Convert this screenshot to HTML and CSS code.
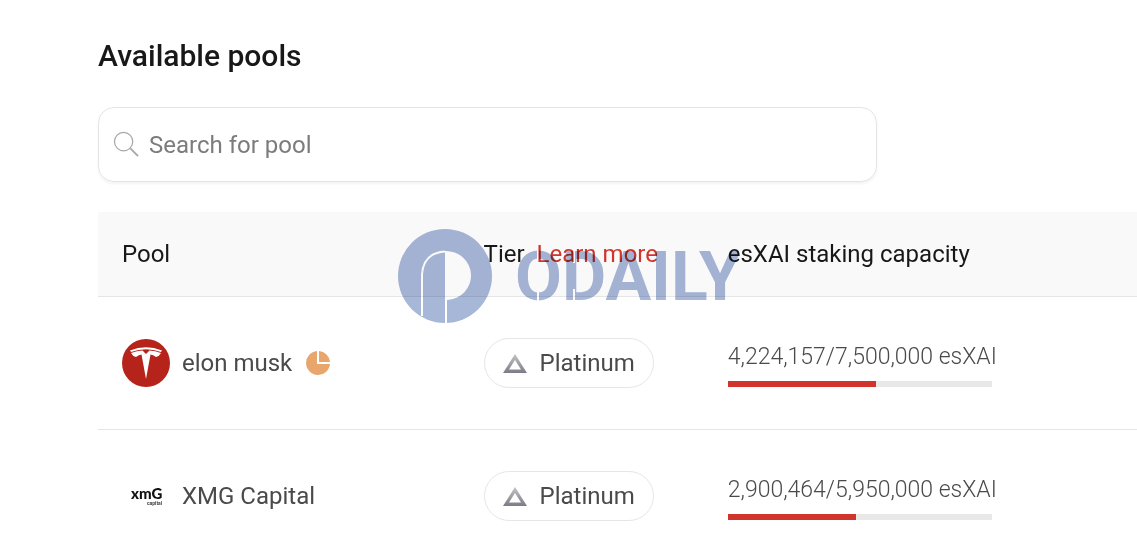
FILE: index.html
```html
<!DOCTYPE html>
<html lang="en">
<head>
  <meta charset="UTF-8">
  <meta name="viewport" content="width=device-width, initial-scale=1.0">
  <title>Available pools</title>
  <link rel="stylesheet" href="styles.css">
</head>
<body>

  <main class="pools">
    <h1>Available pools</h1>

    <!-- Search -->
    <label class="search" for="pool-search">
      <svg class="search-icon" viewBox="0 0 28 28" aria-hidden="true">
        <circle cx="11" cy="11" r="9.5" />
        <path class="handle" d="M18 18l8 8" />
      </svg>
      <input type="search" id="pool-search" placeholder="Search for pool" aria-label="Search for pool">
    </label>

    <!-- Pool list -->
    <div class="table-wrap">
      <table>
        <thead>
          <tr>
            <th class="col-pool">Pool</th>
            <th class="col-tier">Tier <a href="#">Learn more</a></th>
            <th>esXAI staking capacity</th>
          </tr>
        </thead>
        <tbody>
          <tr>
            <td>
              <div class="pool">
                <svg class="avatar" viewBox="0 0 48 48" aria-hidden="true">
                  <circle cx="24" cy="24" r="24" fill="#b5231b" />
                  <path d="M8 11.500Q24 5 40 11.500L39 13Q24 7.500 9 13Z" fill="#fff" />
                  <path d="M9 14Q15 11.500 20.500 11.500L24 15L27.500 11.500Q33 11.500 39 14Q37.500 17 34 18Q31 15.500 28.500 15.500L24 40L19.500 15.500Q17 15.500 14 18Q10.500 17 9 14Z" fill="#fff" />
                </svg>
                <span class="pool-name">elon musk</span>
                <svg class="pie" viewBox="0 0 24 24" aria-hidden="true">
                  <path d="M11 0A12 12 0 1 0 24 13H11Z" />
                  <path d="M13 0A12 12 0 0 1 24 11H13Z" />
                </svg>
              </div>
            </td>
            <td>
              <span class="tier">
                <svg class="tier-icon" viewBox="0 0 24 20" aria-hidden="true">
                  <defs>
                    <linearGradient id="platinum" x1="0" y1="0" x2="0" y2="1">
                      <stop offset="0" stop-color="#c4c4c6" />
                      <stop offset="1" stop-color="#7c7c88" />
                    </linearGradient>
                  </defs>
                  <path fill="url(#platinum)" fill-rule="evenodd" d="M12 1L24 20H0ZM12 7L6 16.500H18Z" />
                </svg>
                Platinum
              </span>
            </td>
            <td>
              <div class="capacity">4,224,157/7,500,000 esXAI</div>
              <div class="bar"><div class="bar-fill" style="width: 56.3%"></div></div>
            </td>
          </tr>
          <tr>
            <td>
              <div class="pool">
                <svg class="avatar" viewBox="0 0 48 48" aria-hidden="true">
                  <text class="xmg" x="9" y="27">xmG</text>
                  <text class="xmg-sub" x="25" y="33">capital</text>
                </svg>
                <span class="pool-name">XMG Capital</span>
              </div>
            </td>
            <td>
              <span class="tier">
                <svg class="tier-icon" viewBox="0 0 24 20" aria-hidden="true">
                  <path fill="url(#platinum)" fill-rule="evenodd" d="M12 1L24 20H0ZM12 7L6 16.500H18Z" />
                </svg>
                Platinum
              </span>
            </td>
            <td>
              <div class="capacity">2,900,464/5,950,000 esXAI</div>
              <div class="bar"><div class="bar-fill" style="width: 48.7%"></div></div>
            </td>
          </tr>
        </tbody>
      </table>

      <!-- Watermark -->
      <div class="watermark">
        <svg class="watermark-mark" viewBox="0 0 94 94" aria-hidden="true">
          <circle cx="47" cy="47" r="47" />
          <path class="bowl" d="M47 22A25 24.500 0 0 1 49 71H47Z" />
          <path class="slit" d="M24 87V46Q25 24 47 22.500M48 70V94" />
        </svg>
        <svg class="watermark-name" viewBox="0 0 224 94" aria-label="ODAILY">
          <text x="0" y="71">ODAILY</text>
          <path class="slit" d="M23 20V36M23 58V76M59 20V34M59 60V76" />
        </svg>
      </div>
    </div>
  </main>

</body>
</html>
```
FILE: styles.css
```css
/* Base styling */
* {
  box-sizing: border-box;
}

body {
  margin: 0;
  background: #fff;
  color: #181818;
  font-family: Roboto, "Liberation Sans", sans-serif;
  font-size: 24px;
  line-height: 32px;
  overflow: hidden;
}

.pools {
  padding: 36px 0 0 98px;
}

h1 {
  margin: 0 0 31px;
  font-size: 30px;
  font-weight: 500;
  line-height: 40px;
}

/* Search */
.search {
  display: flex;
  align-items: center;
  gap: 9px;
  width: 75%;
  height: 75px;
  margin-bottom: 30px;
  padding: 0 14px;
  border: 1px solid #e4e4e4;
  border-radius: 16px;
  box-shadow: 0 2px 3px rgba(0, 0, 0, 0.05);
}

.search-icon {
  width: 27px;
  height: 27px;
  flex: none;
  fill: none;
  stroke: #a9a9a9;
  stroke-width: 1.3;
}

.search-icon .handle {
  stroke-width: 2;
}

.search input {
  flex: 1;
  min-width: 0;
  padding: 0;
  border: none;
  outline: none;
  background: none;
  font: inherit;
}

.search input::placeholder {
  color: #7c7c7c;
}

/* Table */
.table-wrap {
  position: relative;
}

table {
  width: 100%;
  table-layout: fixed;
  border-collapse: separate;
  border-spacing: 0;
}

th,
td {
  padding: 0 0 0 24px;
  border-bottom: 1px solid #e6e6e6;
  text-align: left;
  white-space: nowrap;
}

th {
  height: 85px;
  background: #f9f9f9;
  font-weight: 400;
}

td {
  height: 133px;
  color: #4a4a4a;
}

.col-pool {
  width: 34.8%;
}

.col-tier {
  width: 23.5%;
}

th a {
  margin-left: 6px;
  color: #d0342c;
  text-decoration: none;
}

.pool {
  display: flex;
  align-items: center;
  gap: 12px;
}

.avatar {
  width: 48px;
  height: 48px;
  flex: none;
}

.pie {
  width: 24px;
  height: 24px;
  margin-left: 2px;
  fill: #e9a66c;
}

.xmg {
  fill: #111;
  font-family: Lato, sans-serif;
  font-size: 15px;
  font-weight: 900;
}

.xmg-sub {
  fill: #444;
  font-size: 5px;
  font-weight: 700;
}

.tier {
  display: inline-flex;
  align-items: center;
  gap: 13px;
  height: 50px;
  padding: 0 18px;
  border: 1px solid #e6e6e6;
  border-radius: 25px;
  vertical-align: middle;
}

.tier-icon {
  width: 24px;
  height: 20px;
}

.capacity {
  padding-top: 2px;
  margin-bottom: 8px;
  font-size: 23px;
  font-weight: 300;
}

.bar {
  width: 264px;
  height: 6px;
  background: #e8e8e8;
}

.bar-fill {
  height: 100%;
  background: #d0342c;
}

/* Watermark */
.watermark {
  position: absolute;
  top: 17px;
  left: 300px;
  display: flex;
  gap: 23px;
  mix-blend-mode: multiply;
  pointer-events: none;
}

.watermark svg {
  height: 94px;
  fill: #a7b7d8;
}

.watermark-mark {
  width: 94px;
}

.watermark-name {
  width: 224px;
  font-size: 68px;
  font-weight: 700;
}

.watermark .bowl {
  fill: #fff;
}

.watermark .slit {
  fill: none;
  stroke: #fff;
  stroke-width: 2;
}
```
